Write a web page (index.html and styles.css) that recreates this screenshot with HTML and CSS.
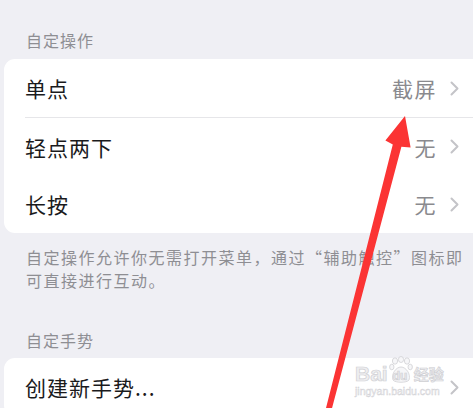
FILE: index.html
```html
<!DOCTYPE html>
<html lang="zh-CN">
<head>
    <meta charset="UTF-8">
    <meta name="viewport" content="width=device-width, initial-scale=1.0">
    <title>辅助触控</title>
    <link rel="stylesheet" href="styles.css">
</head>
<body>
    <div class="screen">
        <div class="group-title first">自定操作</div>
        <div class="card">
            <div class="row">
                <span class="label">单点</span>
                <span class="value">截屏</span>
                <svg class="chevron" width="9" height="15" viewBox="0 0 9 15"><polyline points="1.5,1.5 7.5,7.5 1.5,13.5"/></svg>
            </div>
            <div class="row divided">
                <span class="label">轻点两下</span>
                <span class="value">无</span>
                <svg class="chevron" width="9" height="15" viewBox="0 0 9 15"><polyline points="1.5,1.5 7.5,7.5 1.5,13.5"/></svg>
            </div>
            <div class="row">
                <span class="label">长按</span>
                <span class="value">无</span>
                <svg class="chevron" width="9" height="15" viewBox="0 0 9 15"><polyline points="1.5,1.5 7.5,7.5 1.5,13.5"/></svg>
            </div>
        </div>
        <p class="group-note">自定操作允许你无需打开菜单，通过“辅助触控”图标即可直接进行互动。</p>

        <div class="group-title">自定手势</div>
        <div class="card">
            <div class="row">
                <span class="label">创建新手势...</span>
                <span class="value"></span>
                <svg class="chevron" width="9" height="15" viewBox="0 0 9 15"><polyline points="1.5,1.5 7.5,7.5 1.5,13.5"/></svg>
            </div>
        </div>

        <!-- watermark -->
        <div class="watermark">
            <div class="wm-logo">
                <span class="wm-bai">Bai</span>
                <span class="wm-paw">
                    <svg width="24" height="27" viewBox="0 0 24 27">
                        <ellipse cx="6" cy="5" rx="2.6" ry="3.2"/>
                        <ellipse cx="12" cy="3.5" rx="2.6" ry="3"/>
                        <ellipse cx="18" cy="5" rx="2.6" ry="3.2"/>
                        <ellipse cx="2.8" cy="11" rx="2.2" ry="2.8"/>
                        <ellipse cx="21.2" cy="11" rx="2.2" ry="2.8"/>
                        <path d="M4 24 C2 18 7 11 12 11 C17 11 22 18 20 24 C18 27 6 27 4 24 Z"/>
                    </svg>
                    <span class="wm-du">du</span>
                </span>
                <span class="wm-jy">经验</span>
            </div>
            <div class="wm-url">jingyan.baidu.com</div>
        </div>

        <svg class="arrow" width="473" height="408" viewBox="0 0 473 408">
            <polygon points="405,116 410.6,147.4 401.4,146.8 331,412 325,412 392.8,144.4 385.4,140.6"/>
        </svg>
    </div>
</body>
</html>
```

FILE: styles.css
```css
/* 辅助触控 - 自定操作 */
body {
    margin: 0;
    padding: 0;
    background-color: #efeff4;
    font-family: 'Noto Sans CJK SC', 'Noto Sans', sans-serif;
    overflow: hidden;
}
.screen {
    position: relative;
    height: 408px;
    overflow: hidden;
}
.group-title {
    padding: 0 26px;
    font-size: 16px;
    line-height: 20px;
    letter-spacing: 1px;
    color: #8e8e93;
    margin: 38px 0 8px;
}
.group-title.first {
    margin-top: 30px;
    margin-bottom: 9px;
}
.card {
    background: #fff;
    border-radius: 11px;
    margin: 0 -10px 0 4px;
}
.row {
    display: flex;
    align-items: center;
    height: 58px;
    box-sizing: border-box;
    margin-left: 21px;
    padding-right: 24px;
}
.row.divided {
    border-top: 1px solid #e6e6e9;
}
.label {
    flex: 1;
    font-size: 21px;
    letter-spacing: 1px;
    color: #1a1a1c;
}
.value {
    font-size: 21px;
    letter-spacing: 1.5px;
    color: #8a8a8e;
    margin-right: 13px;
}
.chevron polyline {
    fill: none;
    stroke: #c4c4c8;
    stroke-width: 2;
    stroke-linecap: round;
    stroke-linejoin: round;
}
.group-note {
    margin: 13px 0 0;
    padding: 0 4px 0 26px;
    font-size: 16px;
    line-height: 23px;
    letter-spacing: 1.5px;
    color: #8e8e93;
}
.watermark {
    position: absolute;
    left: 355px;
    top: 355px;
    white-space: nowrap;
    color: #eeeef0;
    -webkit-text-stroke: 0.7px #d0d0d4;
}
.wm-logo {
    display: flex;
    align-items: flex-end;
    height: 28px;
}
.wm-bai {
    font-family: 'Liberation Sans', Arial, sans-serif;
    font-weight: bold;
    font-size: 21px;
    line-height: 19px;
}
.wm-paw {
    position: relative;
    width: 24px;
    height: 27px;
    margin: 0 1px;
}
.wm-paw svg {
    fill: #f6f6f8;
    stroke: #d0d0d4;
    stroke-width: 0.8;
}
.wm-du {
    position: absolute;
    left: 4px;
    bottom: 1px;
    font-family: 'Liberation Sans', Arial, sans-serif;
    font-weight: bold;
    font-size: 12px;
    line-height: 12px;
}
.wm-jy {
    font-size: 15px;
    line-height: 18px;
    font-weight: bold;
}
.wm-url {
    font-family: 'Liberation Sans', Arial, sans-serif;
    font-size: 10.5px;
    line-height: 12px;
    margin-top: 2px;
    -webkit-text-stroke: 0.4px #d0d0d4;
}
.arrow {
    position: absolute;
    left: 0;
    top: 0;
    pointer-events: none;
}
.arrow polygon {
    fill: #fb3434;
}
```
